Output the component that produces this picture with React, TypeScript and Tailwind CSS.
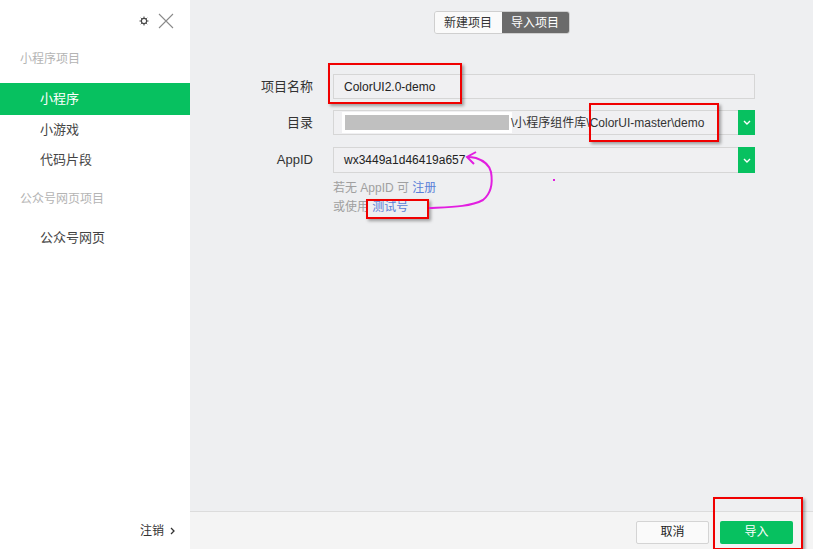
import React from "react";

const font = { fontFamily: '"Liberation Sans", "Noto Sans CJK SC", sans-serif' };

function Chevron() {
  return (
    <svg width="8" height="5" viewBox="0 0 8 5">
      <path d="M1 1 L4 4 L7 1" fill="none" stroke="white" strokeWidth="1.4" />
    </svg>
  );
}

function Gear() {
  return (
    <svg width="10" height="10" viewBox="0 0 10 10">
      <circle cx="5" cy="5" r="2.6" fill="none" stroke="#444" strokeWidth="1.1" />
      <path d="M5 0.5V2 M5 8V9.5 M0.5 5H2 M8 5H9.5 M1.8 1.8L2.8 2.8 M7.2 7.2L8.2 8.2 M1.8 8.2L2.8 7.2 M7.2 2.8L8.2 1.8" stroke="#444" strokeWidth="1" />
    </svg>
  );
}

export default function App() {
  return (
    <div className="relative flex w-[813px] h-[549px] overflow-hidden text-[#333]" style={font}>
      {/* Sidebar */}
      <div className="w-[190px] h-full bg-white flex flex-col">
        <div className="flex justify-end items-center gap-[9px] pr-[16px] pt-[11px] h-[30px]">
          <Gear />
          <svg width="16" height="16" viewBox="0 0 16 16">
            <path d="M1 1 L15 15 M15 1 L1 15" stroke="#8a8a8a" strokeWidth="1.1" />
          </svg>
        </div>
        <div className="pl-[20px] mt-[21px] text-[12px] text-[#b4b4b4] h-[17px] leading-[17px]">小程序项目</div>
        <div className="mt-[15px] h-[32px] bg-[#07c160] text-white text-[13px] pl-[40px] flex items-center">小程序</div>
        <div className="pl-[40px] h-[30px] flex items-center text-[13px] text-[#444]">小游戏</div>
        <div className="pl-[40px] h-[30px] flex items-center text-[13px] text-[#444]">代码片段</div>
        <div className="pl-[20px] mt-[16px] h-[17px] leading-[17px] text-[12px] text-[#b4b4b4]">公众号网页项目</div>
        <div className="pl-[40px] mt-[19px] h-[22px] flex items-center text-[13px] text-[#444]">公众号网页</div>
        <div className="flex-1" />
        <div className="flex items-center justify-end pr-[15px] pb-[9px] text-[12px] text-[#333] gap-[6px]">
          <span>注销</span>
          <svg width="5" height="8" viewBox="0 0 5 8">
            <path d="M1 1 L4 4 L1 7" fill="none" stroke="#333" strokeWidth="1.3" />
          </svg>
        </div>
      </div>

      {/* Main */}
      <div className="flex-1 h-full bg-[#eeeff1] flex flex-col">
        <div className="flex-1 relative">
          <div className="flex justify-center pt-[11px]">
            <div className="flex h-[23px] rounded-[3px] border border-[#cfcfcf] overflow-hidden text-[12px]">
              <div className="w-[67px] bg-[#fafafa] text-[#333] flex items-center justify-center">新建项目</div>
              <div className="w-[67px] bg-[#6b6b6b] text-white flex items-center justify-center">导入项目</div>
            </div>
          </div>

          <div className="flex flex-col mt-[40px] gap-[11px] text-[13px]">
            <div className="flex items-center">
              <div className="w-[123px] text-right text-[13px] text-[#333]">项目名称</div>
              <div className="ml-[20px] w-[422px] h-[25px] border border-[#d6d6d6] bg-[#f0f0f2] flex items-center pl-[10px] text-[12px] text-[#222]">ColorUI2.0-demo</div>
            </div>
            <div className="flex items-center">
              <div className="w-[123px] text-right text-[13px] text-[#333]">目录</div>
              <div className="ml-[20px] w-[422px] h-[25px] border border-[#d6d6d6] bg-[#f0f0f2] flex items-center text-[12px] text-[#333]">
                <div className="ml-[8px] w-[170px] h-[21px] border-[3px] border-white bg-[#c0c0c0]" />
                <span className="ml-[-1px] flex-1 whitespace-nowrap">\小程序组件库\ColorUI-master\demo</span>
                <div className="w-[17px] h-[25px] bg-[#07c160] flex items-center justify-center mr-[-1px]"><Chevron /></div>
              </div>
            </div>
            <div className="flex items-center mt-[1px]">
              <div className="w-[123px] text-right text-[13px] text-[#333]">AppID</div>
              <div className="ml-[20px] w-[422px] h-[26px] border border-[#d6d6d6] bg-[#f0f0f2] flex items-center text-[12px] text-[#222]">
                <span className="pl-[10px] flex-1">wx3449a1d46419a657</span>
                <div className="w-[17px] h-[26px] bg-[#07c160] flex items-center justify-center mr-[-1px]"><Chevron /></div>
              </div>
            </div>
            <div className="ml-[143px] mt-[-5px] text-[12px] leading-[19px] text-[#a0a0a0]">
              <div>若无 AppID 可 <span className="text-[#5a7fd8]">注册</span></div>
              <div>或使用 <span className="text-[#5a7fd8]">测试号</span></div>
            </div>
          </div>
        </div>
        <div className="h-[38px] bg-[#f4f4f4] border-t border-[#dcdcdc] flex items-center justify-end gap-[11px] pr-[20px] pt-[3px]">
          <div className="w-[73px] h-[23px] border border-[#d4d4d4] bg-[#fafafa] rounded-[2px] flex items-center justify-center text-[12px] text-[#222]">取消</div>
          <div className="w-[73px] h-[23px] bg-[#07c160] rounded-[2px] flex items-center justify-center text-[12px] text-white">导入</div>
        </div>
      </div>

      {/* Annotations */}
      <div className="absolute left-[328px] top-[63px] w-[134px] h-[41px] border-2 border-[#f00000] shadow-[2px_2px_3px_rgba(0,0,0,0.35)]" />
      <div className="absolute left-[589px] top-[103px] w-[130px] h-[39px] border-2 border-[#f00000] shadow-[2px_2px_3px_rgba(0,0,0,0.35)]" />
      <div className="absolute left-[366px] top-[199px] w-[63px] h-[20px] border-2 border-[#f00000] shadow-[2px_2px_3px_rgba(0,0,0,0.35)]" />
      <div className="absolute left-[713px] top-[497px] w-[90px] h-[53px] border-2 border-[#f00000] shadow-[2px_2px_3px_rgba(0,0,0,0.35)]" />
      <svg className="absolute left-0 top-0 pointer-events-none" width="813" height="549">
        <path d="M429 208 C450 207 470 207 483 200 C493 192 492 178 491 172 C489 163 482 160 476 158 C472 157 470 157 467 157" fill="none" stroke="#e21ee0" strokeWidth="2" />
        <path d="M476 152 L467 157 L474 164" fill="none" stroke="#e21ee0" strokeWidth="2" />
        <rect x="553" y="179" width="2" height="2" fill="#e21ee0" />
      </svg>
    </div>
  );
}
